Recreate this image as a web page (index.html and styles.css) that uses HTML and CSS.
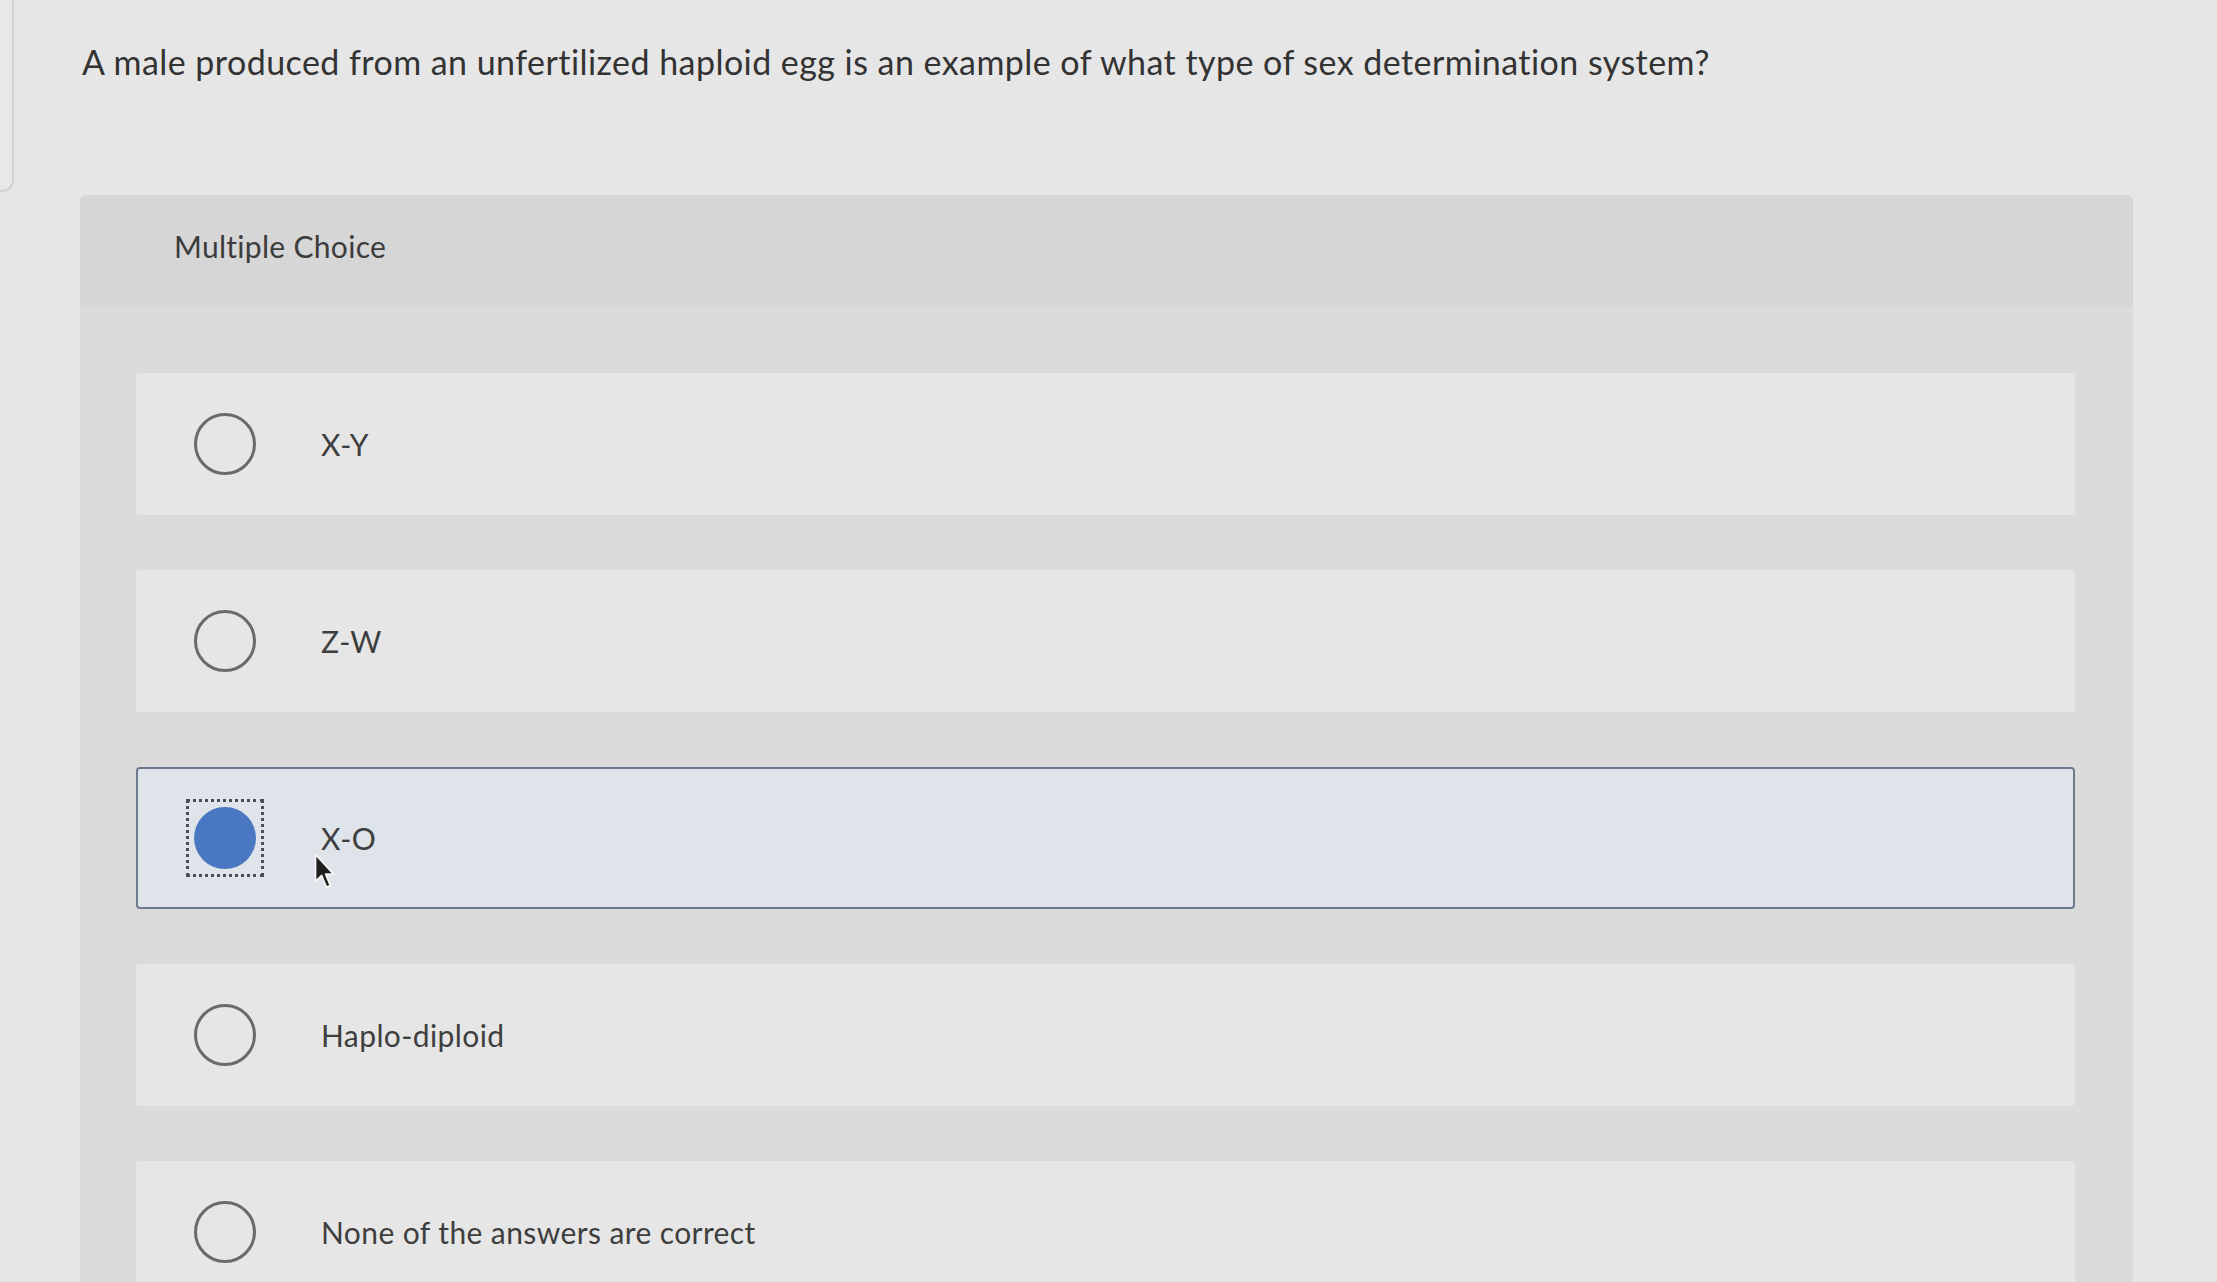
FILE: index.html
```html
<!DOCTYPE html>
<html lang="en">
<head>
<meta charset="utf-8">
<title>Multiple Choice</title>
<link rel="stylesheet" href="styles.css">
</head>
<body>
<div class="page">
  <div class="rail"></div>
  <main class="main">
    <h1 class="question">A male produced from an unfertilized haploid egg is an example of what type of sex determination system?</h1>
    <section class="panel">
      <div class="panel-head">Multiple Choice</div>
      <div class="options">
        <div class="option">
          <span class="focus"><span class="radio"></span></span>
          <span class="label">X-Y</span>
        </div>
        <div class="option">
          <span class="focus"><span class="radio"></span></span>
          <span class="label">Z-W</span>
        </div>
        <div class="option selected">
          <span class="focus"><span class="radio"></span></span>
          <span class="label">X-O</span>
          <svg class="cursor" viewBox="0 0 16 27" width="22" height="37" aria-hidden="true">
            <path d="M1 1 L1 21 L5.5 16.5 L9 25 L12 23.8 L8.5 15.5 L14.5 15.5 Z" fill="#1e1e1e" stroke="#f4f4f4" stroke-width="1.4" stroke-linejoin="round"/>
          </svg>
        </div>
        <div class="option">
          <span class="focus"><span class="radio"></span></span>
          <span class="label">Haplo-diploid</span>
        </div>
        <div class="option">
          <span class="focus"><span class="radio"></span></span>
          <span class="label">None of the answers are correct</span>
        </div>
      </div>
    </section>
  </main>
</div>
</body>
</html>
```

FILE: styles.css
```css
* { box-sizing: border-box; }

html, body {
  margin: 0;
  padding: 0;
  height: 100%;
  overflow: hidden;
}

body {
  background: #e6e6e6;
  font-family: Lato, "Open Sans", "Liberation Sans", sans-serif;
  color: #383838;
}

.page {
  display: flex;
  align-items: flex-start;
  min-height: 100%;
}

.rail {
  flex: 0 0 14px;
  height: 192px;
  background: #e8e8e8;
  border-right: 2px solid #d2d2d2;
  border-bottom: 2px solid #d2d2d2;
  border-bottom-right-radius: 12px;
}

.main {
  flex: 1;
  padding: 0 84px 0 66px;
}

.question {
  margin: 0 0 113px;
  padding: 42px 0 0 2px;
  font-size: 34px;
  line-height: 40px;
  font-weight: 400;
  color: #333;
  letter-spacing: 0.45px;
}

.panel {
  background: #dbdbdb;
  border-radius: 6px 6px 0 0;
  min-height: 1100px;
}

.panel-head {
  height: 112px;
  padding: 34px 0 0 94px;
  background: #d6d6d6;
  border-radius: 6px 6px 0 0;
  font-size: 30px;
  line-height: 34px;
  color: #3c3c3c;
  letter-spacing: 0.3px;
}

.options {
  display: flex;
  flex-direction: column;
  gap: 55px;
  padding: 66px 58px 0 56px;
}

.option {
  position: relative;
  display: flex;
  align-items: center;
  gap: 57px;
  height: 142px;
  padding-left: 48px;
  background: #e6e6e6;
  border: 2px solid transparent;
  border-radius: 4px;
}

.option.selected {
  background: #dee4e9;
  border-color: #6e7b8e;
}

.focus {
  display: flex;
  padding: 5px;
  border: 3px dotted transparent;
}

.selected .focus {
  border-color: #4a4d55;
}

.radio {
  width: 62px;
  height: 62px;
  border-radius: 50%;
  border: 3px solid #6a6a6a;
}

.selected .radio {
  border: none;
  background: #4a77c1;
}

.label {
  font-size: 30px;
  line-height: 34px;
  color: #3e3e3e;
  letter-spacing: 0.4px;
}

.cursor {
  position: absolute;
  left: 176px;
  top: 84px;
}
```
